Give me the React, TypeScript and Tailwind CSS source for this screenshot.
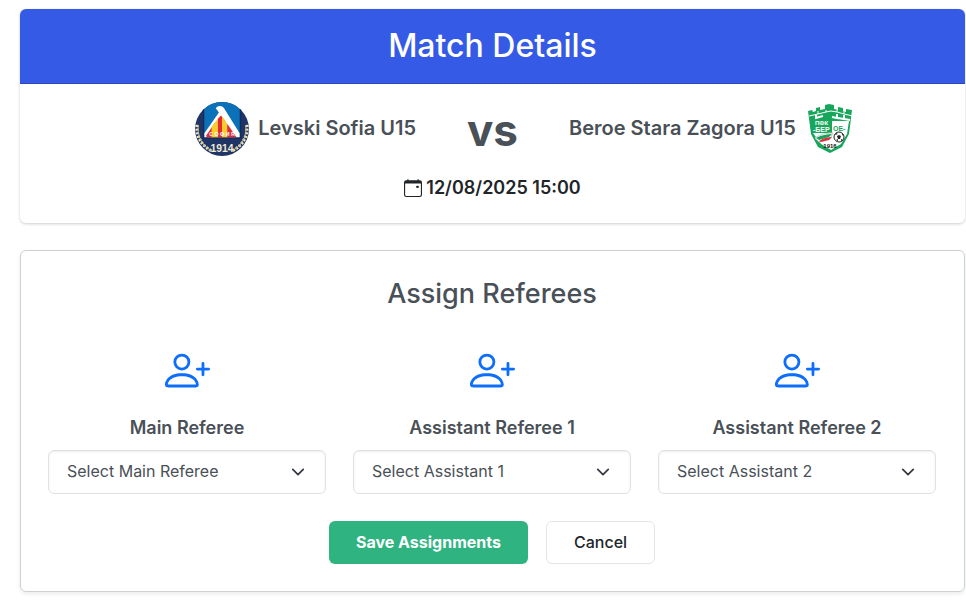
import { BsCalendarEvent, BsPersonPlus } from "react-icons/bs";

function LevskiLogo() {
  return (
    <svg viewBox="0 0 54 54" className="size-14 shrink-0" role="img" aria-label="Levski Sofia">
      <defs>
        <clipPath id="levski-disc">
          <circle cx="27" cy="27" r="26" />
        </clipPath>
      </defs>
      <circle cx="27" cy="27" r="26" fill="#1f3566" />
      <g clipPath="url(#levski-disc)">
        <path d="M10 1h34v34H10z" fill="#0b71b8" />
        <path d="M10 35v-4L24 11l-3-4c2-3 6-3 8 0l15 24v4z" fill="#fff" />
        <path d="M12 35v-2l8-12v14z" fill="#e22b35" />
        <path d="M17 35V25l6-8v18z" fill="#f5cf27" />
        <path d="M23 35V17l3-3 4 5v16z" fill="#e22b35" />
        <path d="M27 35V15l5 7v13z" fill="#f5cf27" />
        <path d="M32 35V22l9 13z" fill="#e22b35" />
      </g>
      <path d="M9 8v28h36V8" fill="none" stroke="#162b57" />
      <path d="M3 23c-1 11 4 20 14 25M51 23c1 11-4 20-14 25" fill="none" stroke="#eee7cc" strokeWidth="3" strokeDasharray="2 1.5" />
      <path d="M4 23c-1 11 4 20 13 25M50 23c1 11-4 20-13 25" fill="none" stroke="#c9b982" strokeWidth="1" />
      <text x="27" y="34" textAnchor="middle" fill="#fff" fontSize="5" fontWeight="700" fontFamily="Liberation Sans, sans-serif">С О Ф И Я</text>
      <text x="27" y="49" textAnchor="middle" fill="#f0ead2" fontSize="10" fontWeight="700" fontFamily="Liberation Sans, sans-serif">1914</text>
    </svg>
  );
}

function BeroeLogo() {
  return (
    <svg viewBox="0 0 54 54" className="size-[54px] shrink-0" role="img" aria-label="Beroe Stara Zagora">
      <path d="M4 9l4-1 1 2 3-1V6l4-1v3l5-1V3l4-1 5 1v4l4 1V5l5 1v3l3 1V7l6 1-3 24-7 13-12 6-12-6-7-13z" fill="#17a65b" />
      <path d="M9 31h19V19h17l-2 13-6 10-10 6-10-6z" fill="#fff" />
      <path d="M5 14l9-2V9M14 12l8-2V8M22 10l5-1 6 1V8M33 10l7 2V9M40 12l9 2" fill="none" stroke="#fff" strokeWidth="1" />
      <path d="M12 13v3l7-2M33 12v4l-5-1M34 16l6 1v-4M40 17l6 1" fill="none" stroke="#fff" strokeWidth="2" />
      <path d="M11 36c6-4 11-5 18-5l-3 6-11 3z" fill="#fff" stroke="#bfc8c3" />
      <path d="M12 36c6-3 11-4 16-4l-3 3-10 3z" fill="#18a05a" />
      <path d="M15 39c5-3 8-4 13-4l-3 3-8 2z" fill="#d83440" />
      <circle cx="35" cy="35" r="5" fill="#fff" stroke="#202020" />
      <path d="M33 34l2-1 2 1-1 3h-2zM31 33l1-2 2 1zM38 31l2 3-2-1zM32 38l2-1v2zM37 37l2 1-2 1z" fill="#202020" />
      <text x="11" y="23" fill="#fff" fontSize="6" fontWeight="700" fontFamily="Liberation Sans, sans-serif">ПФК</text>
      <text x="9" y="30" fill="#fff" fontSize="7" fontWeight="700" fontFamily="Liberation Sans, sans-serif">-БЕР</text>
      <text x="29" y="29" fill="#17a65b" fontSize="7" fontWeight="700" fontFamily="Liberation Sans, sans-serif">ОЕ-</text>
      <text x="26" y="46" textAnchor="middle" fill="#111" fontSize="6" fontWeight="700" fontFamily="Liberation Sans, sans-serif">1916</text>
    </svg>
  );
}

const slots = [
  { id: "main", label: "Main Referee", placeholder: "Select Main Referee" },
  { id: "assistant-1", label: "Assistant Referee 1", placeholder: "Select Assistant 1" },
  { id: "assistant-2", label: "Assistant Referee 2", placeholder: "Select Assistant 2" },
];

export default function App() {
  return (
    <main className="pt-[9px] pr-px pb-2 pl-5 font-['Inter',sans-serif] text-[#212529]">
      <section className="overflow-hidden rounded-md shadow-[0_1px_3px_rgba(0,0,0,0.2)]">
        <header className="border-b border-[#2a48ba] bg-[#345ae6] py-[13px] text-center text-white">
          <h1 className="text-[32px] leading-12 font-medium">Match Details</h1>
        </header>
        <div className="px-4 pt-4 pb-[21px]">
          <div className="grid grid-cols-[1fr_auto_1fr] items-center gap-[51px] text-[#495057]">
            <div className="flex items-center justify-end gap-2">
              <LevskiLogo />
              <h2 className="pb-0.5 text-xl font-semibold">Levski Sofia U15</h2>
            </div>
            <span className="pt-0.5 text-[44px] leading-[56px] font-bold">vs</span>
            <div className="flex items-center gap-2">
              <h2 className="pb-0.5 text-xl font-semibold">Beroe Stara Zagora U15</h2>
              <BeroeLogo />
            </div>
          </div>
          <p className="mt-4 flex items-center justify-center gap-1 text-lg font-semibold">
            <BsCalendarEvent aria-hidden="true" />
            12/08/2025 15:00
          </p>
        </div>
      </section>

      <section className="mt-[27px] rounded-md border border-[#ced0d2] pt-[25px] pr-7 pb-[27px] pl-[27px] shadow-[0_2px_4px_rgba(0,0,0,0.08)]">
        <h2 className="text-center text-[27px] leading-9 font-medium text-[#495057]">Assign Referees</h2>
        <form>
          <div className="mt-9 grid grid-cols-3 gap-[27px]">
            {slots.map((slot) => (
              <div key={slot.id} className="flex flex-col items-center">
                <BsPersonPlus className="size-[45px] text-[#0d6efd]" aria-hidden="true" />
                <label htmlFor={slot.id} className="mt-[21px] text-lg font-semibold text-[#495057]">
                  {slot.label}
                </label>
                <div className="relative mt-2 w-full">
                  <select
                    id={slot.id}
                    className="h-11 w-full appearance-none rounded-md border border-[#dee2e6] bg-white px-[18px] pb-[2px] text-base text-[#495057] shadow-[inset_0_1px_2px_rgba(0,0,0,0.075)]"
                  >
                    <option>{slot.placeholder}</option>
                  </select>
                  <svg viewBox="0 0 16 16" className="pointer-events-none absolute top-[15px] right-[21px] size-3.5" fill="none" stroke="#343a40" strokeWidth="2" strokeLinecap="round" strokeLinejoin="round" aria-hidden="true">
                    <path d="m2 5 6 6 6-6" />
                  </svg>
                </div>
              </div>
            ))}
          </div>
          <div className="mt-[27px] flex justify-center gap-[18px]">
            <button type="button" className="h-[43px] rounded-md bg-[#2fb380] px-[27px] pb-0.5 text-base font-bold text-white">
              Save Assignments
            </button>
            <button type="button" className="h-[43px] rounded-md border border-[#e3e5e8] bg-white px-[27px] pb-0.5 text-base font-medium">
              Cancel
            </button>
          </div>
        </form>
      </section>
    </main>
  );
}
